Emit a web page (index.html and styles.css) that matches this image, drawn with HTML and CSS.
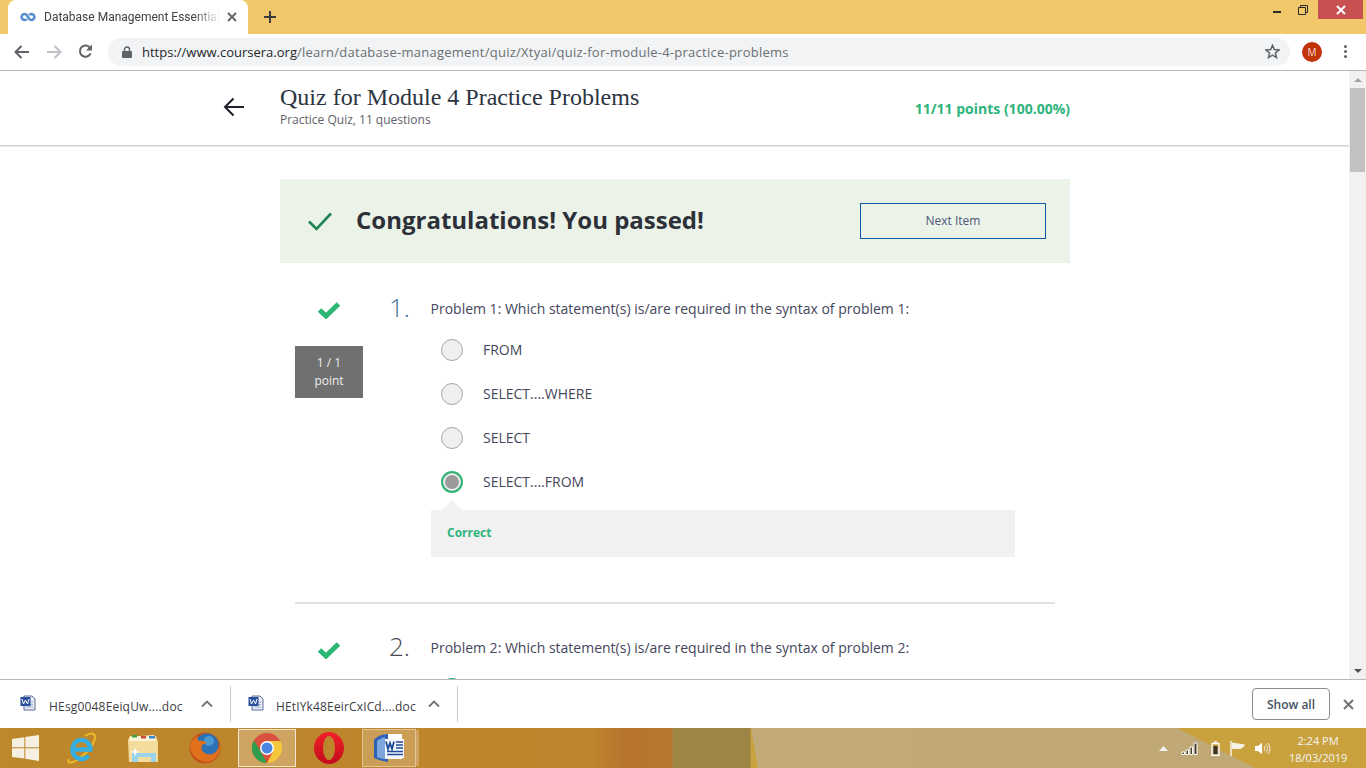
FILE: index.html
```html
<!DOCTYPE html>
<html lang="en">
<head>
<meta charset="utf-8">
<title>Database Management Essentials</title>
<link rel="stylesheet" href="styles.css">
</head>
<body>
<div class="tabstrip">
  <div class="tab">
    <svg class="tab-logo" width="16" height="10" viewBox="0 0 16 10"><path d="M6.800 3A3 3 0 1 0 6.800 7M9.200 3A3 3 0 1 1 9.200 7L6.800 3" fill="none" stroke="#5a8fcf" stroke-width="2.600"/></svg>
    <span class="tab-title">Database Management Essentials</span>
    <svg class="tab-close" width="10" height="10" viewBox="0 0 10 10"><path d="M1 1L9 9M9 1L1 9" stroke="#5f6368" stroke-width="1.800"/></svg>
  </div>
  <svg class="newtab" width="12" height="12" viewBox="0 0 12 12"><path d="M6 0V12M0 6H12" stroke="#3c3c3c" stroke-width="2"/></svg>
  <div class="winctl">
    <svg class="win-min" width="8" height="3" viewBox="0 0 8 3"><rect width="8" height="2" y="1" fill="#2a2a2a"/></svg>
    <svg class="win-max" width="10" height="10" viewBox="0 0 10 10"><path d="M2.500 2.500V.5H9.500V7.500H7.500M.5 2.500H7.500V9.500H.5Z" fill="none" stroke="#2a2a2a"/></svg>
    <div class="win-close"><svg width="10" height="10" viewBox="0 0 10 10"><path d="M1 1L9 9M9 1L1 9" stroke="#fff" stroke-width="2"/></svg></div>
  </div>
</div>
<div class="toolbar">
  <svg class="navicon" width="16" height="14" viewBox="0 0 16 14"><path d="M15 7H2M7.500 1L1.500 7L7.500 13" fill="none" stroke="#5f6368" stroke-width="2"/></svg>
  <svg class="navicon" width="16" height="14" viewBox="0 0 16 14"><path d="M1 7H14M8.500 1L14.500 7L8.500 13" fill="none" stroke="#bdc1c6" stroke-width="2"/></svg>
  <svg class="navicon" width="15" height="15" viewBox="0 0 15 15"><path d="M12.600 9.500A5.600 5.600 0 1 1 11.500 3.200" fill="none" stroke="#5f6368" stroke-width="2"/><path d="M14 0.500V6.500H8Z" fill="#5f6368"/></svg>
  <div class="omnibox">
    <svg class="lock" width="10" height="12" viewBox="0 0 10 12"><path d="M2.500 5V3.500a2.500 2.500 0 0 1 5 0V5" fill="none" stroke="#5f6368" stroke-width="1.400"/><rect y="5" width="10" height="7" rx="1" fill="#5f6368"/></svg>
    <span class="url"><span class="url-host">https://www.coursera.org</span>/learn/database-management/quiz/Xtyai/quiz-for-module-4-practice-problems</span>
    <svg class="star" width="15" height="15" viewBox="0 0 15 15"><path d="M7.500 1.300L9.300 5.600L14 6L10.400 9L11.500 13.600L7.500 11.200L3.500 13.600L4.600 9L1 6L5.700 5.600Z" fill="none" stroke="#5f6368" stroke-width="1.500"/></svg>
  </div>
  <div class="avatar">M</div>
  <div class="kebab"><i></i><i></i><i></i></div>
</div>
<div class="viewport">
  <main class="page">
    <header class="quiz-head">
      <div class="quiz-head-inner">
        <svg class="back" width="22" height="20" viewBox="0 0 22 20"><path d="M21 10H2M10.500 1.500L2 10L10.500 18.500" fill="none" stroke="#1f1f2e" stroke-width="2"/></svg>
        <div class="quiz-titles">
          <h1 class="quiz-title">Quiz for Module 4 Practice Problems</h1>
          <div class="quiz-sub">Practice Quiz, 11 questions</div>
        </div>
        <div class="score">11/11 points (100.00%)</div>
      </div>
    </header>
    <div class="column">
      <section class="banner">
        <svg class="banner-check" width="26" height="20" viewBox="0 0 26 20"><path d="M2 10.500L9.500 18L24 2.500" fill="none" stroke="#1f8354" stroke-width="2.600"/></svg>
        <div class="banner-text">Congratulations! You passed!</div>
        <button class="next">Next Item</button>
      </section>
      <section class="question first">
        <div class="q-side">
          <svg class="q-check" width="24" height="18" viewBox="0 0 24 18"><path d="M2.500 9L9 15L21.500 3" fill="none" stroke="#2bb673" stroke-width="5"/></svg>
          <div class="q-badge">1 / 1<br>point</div>
        </div>
        <div class="q-num">1.</div>
        <div class="q-body">
          <div class="q-text">Problem 1: Which statement(s) is/are required in the syntax of problem 1:</div>
          <div class="option"><span class="radio"></span>FROM</div>
          <div class="option"><span class="radio"></span>SELECT....WHERE</div>
          <div class="option"><span class="radio"></span>SELECT</div>
          <div class="option"><span class="radio chosen"></span>SELECT....FROM</div>
          <div class="feedback">Correct</div>
        </div>
      </section>
      <section class="question second">
        <div class="q-side">
          <svg class="q-check" width="24" height="18" viewBox="0 0 24 18"><path d="M2.500 9L9 15L21.500 3" fill="none" stroke="#2bb673" stroke-width="5"/></svg>
        </div>
        <div class="q-num">2.</div>
        <div class="q-body">
          <div class="q-text">Problem 2: Which statement(s) is/are required in the syntax of problem 2:</div>
          <div class="option"><span class="radio chosen"></span></div>
        </div>
      </section>
    </div>
  </main>
  <div class="scrollbar">
    <span class="sb-up"></span>
    <span class="sb-thumb"></span>
    <span class="sb-down"></span>
  </div>
</div>
<div class="downloads">
  <div class="dl-item">
    <svg class="dl-icon" width="16" height="16" viewBox="0 0 16 16"><path d="M4 1H12L15 4V15H4Z" fill="#e6ebf5" stroke="#5a6f95"/><path d="M6 7H13M6 9.500H13M6 12H13" stroke="#9fb0cf"/><rect x="0.500" y="2" width="10" height="9" fill="#2a4f9c"/><path d="M2 4L3.500 9L5.500 5L7.500 9L9 4" fill="none" stroke="#fff"/></svg>
    <span class="dl-name">HEsg0048EeiqUw....doc</span>
    <svg class="dl-caret" width="12" height="8" viewBox="0 0 12 8"><path d="M1 6.500L6 1.500L11 6.500" fill="none" stroke="#6f7276" stroke-width="1.800"/></svg>
  </div>
  <div class="dl-item">
    <svg class="dl-icon" width="16" height="16" viewBox="0 0 16 16"><path d="M4 1H12L15 4V15H4Z" fill="#e6ebf5" stroke="#5a6f95"/><path d="M6 7H13M6 9.500H13M6 12H13" stroke="#9fb0cf"/><rect x="0.500" y="2" width="10" height="9" fill="#2a4f9c"/><path d="M2 4L3.500 9L5.500 5L7.500 9L9 4" fill="none" stroke="#fff"/></svg>
    <span class="dl-name">HEtIYk48EeirCxICd....doc</span>
    <svg class="dl-caret" width="12" height="8" viewBox="0 0 12 8"><path d="M1 6.500L6 1.500L11 6.500" fill="none" stroke="#6f7276" stroke-width="1.800"/></svg>
  </div>
  <button class="show-all">Show all</button>
  <svg class="dl-close" width="11" height="11" viewBox="0 0 11 11"><path d="M1 1L10 10M10 1L1 10" stroke="#6f7276" stroke-width="2"/></svg>
</div>
<footer class="taskbar">
  <svg class="tb-start" width="27" height="26" viewBox="0 0 27 26"><path d="M0 4L12.300 2.200V12.300H0ZM13.300 2L27 0V12.300H13.300ZM0 13.300H12.300V23.600L0 22ZM13.300 13.300H27V26L13.300 23.800Z" fill="#f6f0e2"/></svg>
  <div class="tb-btn"><svg width="30" height="32" viewBox="0 0 30 32"><path d="M3 27C0 32 6 32 14 26S29 11 29 5C29 0 23 1 19 4" fill="none" stroke="#eebb22" stroke-width="2"/><path d="M7.500 17.500H24.500A9 9.500 0 1 0 22.500 23.500" fill="none" stroke="#35aee2" stroke-width="4.500"/></svg></div>
  <div class="tb-btn"><svg width="32" height="32" viewBox="0 0 32 32"><path d="M1 8L3 4H29L31 10V30H2Z" fill="#f4dd9c"/><path d="M3 5L27 3L29 9H3Z" fill="#fbf3da"/><rect x="5" y="3" width="5" height="2.500" fill="#3aa04a"/><rect x="14" y="4" width="5" height="2.500" fill="#d04a3a"/><rect x="22" y="4" width="6" height="2.500" fill="#3a8ad0"/><path d="M5 30V21H29V30H24V25H11V30Z" fill="#9ad3ee"/><path d="M8 15L9 19L13 20L9 21L8 25L7 21L3 20L7 19Z" fill="#fff"/></svg></div>
  <div class="tb-btn"><svg width="32" height="32" viewBox="0 0 32 32"><circle cx="16" cy="16" r="15.500" fill="#c2501c"/><circle cx="18" cy="13" r="11.500" fill="#2c72b4"/><circle cx="20" cy="9" r="5" fill="#4a9ad0"/><path d="M1 14C2 26 13 31 20 29.500C28 28 32 20 31 13C29 20 23 23.500 18 22C14 21 11.500 17.500 13 13.500C14 11.500 17 12 18 11C15 9 13 8.500 11 9C9 9 8 7 8 4C5 6 2 9 1 14Z" fill="#e0701c"/></svg></div>
  <div class="tb-btn active"><svg width="30" height="30" viewBox="0 0 30 30"><circle cx="15" cy="15" r="15" fill="#d9503f"/><path d="M15 30A15 15 0 0 1 2 7.500L9 19L15 30Z" fill="#2f9e4f"/><path d="M15 8H28.500A15 15 0 0 1 15 30L21 19Z" fill="#f6c63c"/><circle cx="15" cy="15" r="7" fill="#fff"/><circle cx="15" cy="15" r="5.500" fill="#4a86e0"/></svg></div>
  <div class="tb-btn"><svg width="30" height="32" viewBox="0 0 30 32"><defs><linearGradient id="opera" x1="0" y1="0" x2="0" y2="1"><stop offset="0" stop-color="#f0202a"/><stop offset="1" stop-color="#c20c1c"/></linearGradient></defs><path fill-rule="evenodd" d="M15 0A15 16 0 1 1 15 32A15 16 0 1 1 15 0ZM15 4A6 12 0 1 0 15 28A6 12 0 1 0 15 4Z" fill="url(#opera)"/></svg></div>
  <div class="tb-btn word"><svg width="32" height="30" viewBox="0 0 32 30"><path d="M11 1H29V26H11Z" fill="#fff"/><path d="M1 7C4 3 10 1 15 1V29C10 28 5 27 1 25Z" fill="#2f62b5"/><path d="M4 8C6 6 9 5 12 4V26C9 26 6 25 4 24Z" fill="#7ea6de"/><path d="M12 6H31V25L12 26Z" fill="#f6f8fc"/><path d="M13 8.500L15 16L17 10L19 16L21 8.500" fill="none" stroke="#1e4a9a" stroke-width="1.800"/><path d="M23 9H30M23 12H30M23 15H30M14 18.500H30M14 21.500H30" stroke="#1e4a9a" stroke-width="1.600"/></svg></div>
  <div class="tray">
    <svg class="tray-caret" width="9" height="5" viewBox="0 0 9 5"><path d="M0 5L4.500 0L9 5Z" fill="#f2f2f2"/></svg>
    <svg class="tray-signal" width="17" height="13" viewBox="0 0 17 13"><path d="M1 10h2.500v2.500H1zM5 8h2.500v4.500H5zM9 5h2.500v7.500H9zM13 1h3v11.500h-3z" fill="#4a3f2a" stroke="#fff"/></svg>
    <svg class="tray-battery" width="9" height="15" viewBox="0 0 9 15"><path d="M1 2.500H8V14.500H1ZM3 .8H6" fill="none" stroke="#fff" stroke-width="1.300"/><rect x="2.500" y="5" width="4" height="8" fill="#3b3324"/></svg>
    <svg width="15" height="15" viewBox="0 0 15 15"><path d="M1 0V15" stroke="#fff" stroke-width="1.300"/><path d="M2 1.500L8 2.500L15 3.500C14 6 12 8 8 8L2 8Z" fill="#f6f2e6"/></svg>
    <svg width="16" height="13" viewBox="0 0 16 13"><path d="M0 4H3L7 .8V12.200L3 9H0Z" fill="#fff"/><path d="M9 4C10 5.500 10 7.500 9 9M11 2.500C13 5 13 8 11 10.500M13 1C15.500 4.500 15.500 8.500 13 12" fill="none" stroke="#f2f2f2"/></svg>
    <div class="clock"><div>2:24 PM</div><div>18/03/2019</div></div>
  </div>
</footer>
</body>
</html>
```
FILE: styles.css
```css
* { box-sizing: border-box; }
html, body { margin: 0; height: 768px; overflow: hidden; }
body { display: flex; flex-direction: column; font-family: "Open Sans", "Liberation Sans", sans-serif; background: #fff; color: #3d3d47; }

.tabstrip { height: 34px; background: #f0c869; display: flex; align-items: flex-start; flex: none; }
.tab { width: 240px; height: 34px; margin-left: 8px; background: #fff; border-radius: 8px 8px 0 0; display: flex; align-items: center; padding: 0 11px 0 12px; }
.tab-logo { flex: none; }
.tab-title { font: 12px Roboto, "Open Sans", sans-serif; color: #3c4043; margin-left: 8px; white-space: nowrap; -webkit-mask-image: linear-gradient(90deg, #000 150px, transparent 176px); mask-image: linear-gradient(90deg, #000 150px, transparent 176px); }
.tab-close { margin-left: auto; flex: none; }
.newtab { margin: 11px 0 0 16px; }
.winctl { margin-left: auto; display: flex; align-items: flex-start; }
.win-min { margin: 10px 17px 0 0; }
.win-max { margin: 5px 10px 0 0; }
.win-close { width: 45px; height: 19px; background: #c75050; display: flex; align-items: center; justify-content: center; margin-right: 3px; }

.toolbar { height: 37px; flex: none; border-bottom: 1px solid #b7b7b7; display: flex; align-items: center; padding: 0 0 1px 14px; background: #fff; }
.navicon { margin-right: 16px; flex: none; }
.omnibox { width: 1182px; height: 28px; margin-left: -1px; background: #f1f3f4; border-radius: 14px; display: flex; align-items: center; padding: 0 10px 0 14px; }
.lock { flex: none; }
.url { margin-left: 10px; font-size: 13px; letter-spacing: .25px; color: #6b6f75; white-space: nowrap; }
.url-host { color: #26282c; letter-spacing: 0; }
.star { margin-left: auto; }
.avatar { width: 20px; height: 20px; border-radius: 50%; background: #c1330a; color: #f5d9cf; font-size: 10px; line-height: 20px; text-align: center; margin-left: 12px; flex: none; }
.kebab { display: flex; flex-direction: column; gap: 2px; margin-left: 22px; }
.kebab i { width: 3px; height: 3px; border-radius: 50%; background: #5f6368; display: block; }

.viewport { flex: 1; min-height: 0; display: flex; overflow: hidden; }
.page { flex: 1; min-width: 0; overflow: hidden; }
.scrollbar { width: 17px; flex: none; background: #f1f1f1; display: flex; flex-direction: column; align-items: center; }
.sb-up { width: 0; height: 0; border: 4px solid transparent; border-top: 0; border-bottom: 4px solid #a3a3a3; margin-top: 7px; }
.sb-thumb { width: 15px; height: 84px; background: #c1c1c1; margin-top: 6px; }
.sb-down { width: 0; height: 0; border: 4px solid transparent; border-bottom: 0; border-top: 4px solid #505050; margin-top: auto; margin-bottom: 6px; }

.quiz-head { height: 75px; border-bottom: 1px solid #d0d0d0; box-shadow: 0 1px 1px rgba(0,0,0,.08); }
.quiz-head-inner { width: 790px; margin-left: 280px; height: 74px; position: relative; display: flex; align-items: flex-start; }
.back { position: absolute; left: -57px; top: 26px; }
.quiz-titles { padding-top: 12px; }
.quiz-title { margin: 0; font: 400 24px/29px "Liberation Serif", "DejaVu Serif", serif; color: #2c3440; }
.quiz-sub { font-size: 12px; line-height: 15px; color: #5f6169; }
.score { margin-left: auto; margin-top: 28px; font-size: 14px; font-weight: 700; line-height: 19px; color: #2eb47c; }

.column { width: 790px; margin-left: 280px; }
.banner { height: 84px; margin-top: 33px; background: #ebf3e8; display: flex; align-items: center; padding-left: 27px; }
.banner-text { font-size: 24px; font-weight: 700; color: #2d3038; margin: 0 0 4px 23px; }
.next { width: 186px; height: 36px; margin-left: auto; margin-right: 24px; background: transparent; border: 1px solid #0f59a6; font: 400 12px "Open Sans", sans-serif; color: #4a5578; padding: 0 0 2px; }

.question { margin: 0 15px; display: flex; }
.question.first { padding-top: 29px; height: 341px; border-bottom: 2px solid #e2e2e2; }
.question.second { padding-top: 27px; }
.q-side { width: 68px; flex: none; display: flex; flex-direction: column; align-items: center; }
.q-check { margin-top: 9px; margin-left: -1px; flex: none; }
.second .q-check { margin-top: 10px; }
.q-badge { width: 68px; height: 52px; margin-top: 27px; background: #707070; color: #eee; font-size: 12px; line-height: 18px; text-align: center; padding-top: 8px; }
.q-num { width: 68px; flex: none; padding-left: 26px; font-size: 26px; font-weight: 300; line-height: 30px; color: #3f6f99; }
.second .q-num { color: #4a4a52; }
.q-body { flex: 1; min-width: 0; }
.q-text { font-size: 14px; line-height: 20px; padding-top: 7px; margin-left: -.5px; color: #44465a; }
.option { height: 44px; display: flex; align-items: center; padding: 0 0 2px 10px; font-size: 14px; color: #44465a; }
.q-text + .option { margin-top: 9px; }
.radio { width: 22px; height: 22px; border-radius: 50%; background: #efefef; border: 1px solid #a9a9a9; margin: 2px 20px 0 0; flex: none; }
.radio.chosen { border: 2px solid #2bb673; background: #9a9a9a; box-shadow: inset 0 0 0 2px #efefef; }
.feedback { position: relative; width: 584px; height: 47px; margin-top: 6px; background: #f1f1f1; padding: 0 16px; font-size: 12px; font-weight: 700; line-height: 46px; color: #2eb47c; }
.feedback::before { content: ""; position: absolute; left: 11px; top: -10px; border: 10px solid transparent; border-top: 0; border-bottom-color: #f1f1f1; }

.downloads { height: 49px; flex: none; border-top: 1px solid #b7b7b7; background: #fff; display: flex; align-items: center; padding-right: 12px; }
.dl-item { width: 231px; height: 36px; border-right: 1px solid #c8c8c8; display: flex; align-items: center; padding-left: 20px; flex: none; }
.dl-item + .dl-item { width: 227px; padding-left: 17px; }
.dl-icon { flex: none; margin-top: -2px; }
.dl-name { font-size: 12px; letter-spacing: .18px; color: #3c4043; margin-left: 13px; margin-top: 4px; width: 140px; white-space: nowrap; }
.dl-item + .dl-item .dl-name { margin-left: 12px; letter-spacing: .15px; }
.dl-caret { margin-left: 12px; }
.show-all { margin-left: auto; width: 78px; height: 32px; border: 1px solid #8a8d91; border-radius: 4px; background: #fff; font: 600 12px "Open Sans", sans-serif; color: #45525f; padding: 0; }
.dl-close { margin-left: 13px; }

.taskbar { height: 40px; flex: none; display: flex; align-items: center; padding-left: 12px; position: relative; background: linear-gradient(90deg, #bd872c 0, #bf852c 590px, #b8742f 625px, #b8762f 672px, #a08644 673px, #9f8545 750px, #c9a23e 751px, #c9a23e 100%); }
.taskbar::before { content: ""; position: absolute; inset: 0; background: linear-gradient(90deg, #c6ae7c, #bfa875); clip-path: polygon(751px 0, 1177px 0, 1255px 40px, 758px 40px); }
.taskbar > * { position: relative; }
.tb-start { flex: none; margin-right: 11px; }
.tb-btn { width: 62px; height: 40px; display: flex; align-items: center; justify-content: center; flex: none; }
.tb-btn.active { height: 38px; width: 58px; margin: 0 2px; background: rgba(255,255,255,.25); border: 1px solid #f2e8d2; }
.tb-btn.word { height: 38px; width: 54px; margin-left: 2px; background: rgba(255,255,255,.2); border: 1px solid rgba(255,255,255,.4); box-shadow: 4px 0 0 -1px rgba(255,255,255,.25); }
.tray { margin-left: auto; display: flex; align-items: center; gap: 10px; padding: 1px 19px 0 0; color: #f5f5f5; }
.tray-caret { margin-right: 3px; }
.tray-signal { margin-right: 3px; }
.clock { font-size: 11px; line-height: 17px; text-align: center; margin-left: 8px; width: 58px; white-space: nowrap; }
```
